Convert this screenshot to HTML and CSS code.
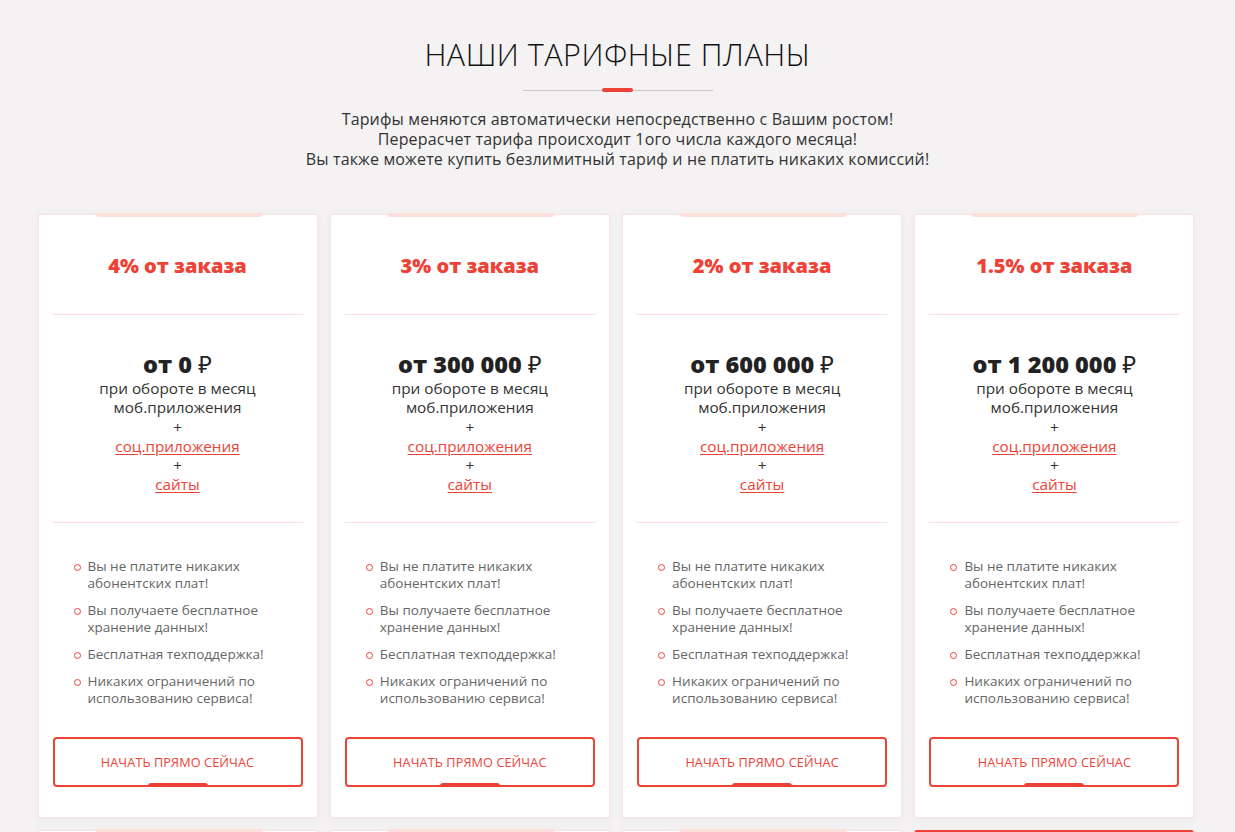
FILE: index.html
```html
<!DOCTYPE html>
<html lang="ru">
<head>
<meta charset="utf-8">
<title>Наши тарифные планы</title>
<link rel="stylesheet" href="styles.css">
</head>
<body>
<section class="plans">
  <h1 class="plans-title">НАШИ ТАРИФНЫЕ ПЛАНЫ</h1>
  <div class="sep"><span class="sep-mark"></span></div>
  <p class="plans-lead">Тарифы меняются автоматически непосредственно с Вашим ростом!<br>Перерасчет тарифа происходит 1ого числа каждого месяца!<br>Вы также можете купить безлимитный тариф и не платить никаких комиссий!</p>

  <div class="grid">
    <div class="card">
      <span class="card-tab"></span>
      <div class="card-head">4% от заказа</div>
      <div class="card-price">
        <div class="price">от 0 <span class="rub">₽</span></div>
        <div>при обороте в месяц</div>
        <div>моб.приложения</div>
        <div>+</div>
        <div><a href="#" class="lnk">соц.приложения</a></div>
        <div>+</div>
        <div><a href="#" class="lnk">сайты</a></div>
      </div>
      <ul class="feats">
        <li>Вы не платите никаких абонентских плат!</li>
        <li>Вы получаете бесплатное хранение данных!</li>
        <li>Бесплатная техподдержка!</li>
        <li>Никаких ограничений по использованию сервиса!</li>
      </ul>
      <a href="#" class="btn">НАЧАТЬ ПРЯМО СЕЙЧАС<span class="btn-tab"></span></a>
    </div>
    <div class="card">
      <span class="card-tab"></span>
      <div class="card-head">3% от заказа</div>
      <div class="card-price">
        <div class="price">от 300 000 <span class="rub">₽</span></div>
        <div>при обороте в месяц</div>
        <div>моб.приложения</div>
        <div>+</div>
        <div><a href="#" class="lnk">соц.приложения</a></div>
        <div>+</div>
        <div><a href="#" class="lnk">сайты</a></div>
      </div>
      <ul class="feats">
        <li>Вы не платите никаких абонентских плат!</li>
        <li>Вы получаете бесплатное хранение данных!</li>
        <li>Бесплатная техподдержка!</li>
        <li>Никаких ограничений по использованию сервиса!</li>
      </ul>
      <a href="#" class="btn">НАЧАТЬ ПРЯМО СЕЙЧАС<span class="btn-tab"></span></a>
    </div>
    <div class="card">
      <span class="card-tab"></span>
      <div class="card-head">2% от заказа</div>
      <div class="card-price">
        <div class="price">от 600 000 <span class="rub">₽</span></div>
        <div>при обороте в месяц</div>
        <div>моб.приложения</div>
        <div>+</div>
        <div><a href="#" class="lnk">соц.приложения</a></div>
        <div>+</div>
        <div><a href="#" class="lnk">сайты</a></div>
      </div>
      <ul class="feats">
        <li>Вы не платите никаких абонентских плат!</li>
        <li>Вы получаете бесплатное хранение данных!</li>
        <li>Бесплатная техподдержка!</li>
        <li>Никаких ограничений по использованию сервиса!</li>
      </ul>
      <a href="#" class="btn">НАЧАТЬ ПРЯМО СЕЙЧАС<span class="btn-tab"></span></a>
    </div>
    <div class="card">
      <span class="card-tab"></span>
      <div class="card-head">1.5% от заказа</div>
      <div class="card-price">
        <div class="price">от 1 200 000 <span class="rub">₽</span></div>
        <div>при обороте в месяц</div>
        <div>моб.приложения</div>
        <div>+</div>
        <div><a href="#" class="lnk">соц.приложения</a></div>
        <div>+</div>
        <div><a href="#" class="lnk">сайты</a></div>
      </div>
      <ul class="feats">
        <li>Вы не платите никаких абонентских плат!</li>
        <li>Вы получаете бесплатное хранение данных!</li>
        <li>Бесплатная техподдержка!</li>
        <li>Никаких ограничений по использованию сервиса!</li>
      </ul>
      <a href="#" class="btn">НАЧАТЬ ПРЯМО СЕЙЧАС<span class="btn-tab"></span></a>
    </div>

    <div class="card card-next"><span class="card-tab"></span></div>
    <div class="card card-next"><span class="card-tab"></span></div>
    <div class="card card-next"><span class="card-tab"></span></div>
    <div class="card card-next card-hot"></div>
  </div>
</section>
</body>
</html>
```
FILE: styles.css
```css
* { box-sizing: border-box; }
html, body { margin: 0; padding: 0; }
body {
  background: #f4f2f3;
  font-family: "Open Sans", "Noto Sans", sans-serif;
  color: #333;
}
.plans {
  padding-top: 34px;
  padding-bottom: 40px;
}
.plans-title {
  margin: 0;
  text-align: center;
  font-weight: 300;
  font-size: 30.5px;
  line-height: 40px;
  color: #111;
  letter-spacing: 0.5px;
}
.sep {
  position: relative;
  width: 190px;
  height: 1px;
  background: #c9c6c7;
  margin: 16px auto 0;
}
.sep-mark {
  position: absolute;
  left: 79px;
  top: -2px;
  width: 31px;
  height: 4px;
  border-radius: 2px;
  background: #ee4236;
}
.plans-lead {
  margin: 18px 0 0;
  text-align: center;
  font-size: 16px;
  line-height: 20px;
  color: #333;
  letter-spacing: 0.15px;
}
.grid {
  width: 1160px;
  margin: 45px auto 0;
  display: grid;
  grid-template-columns: repeat(4, 280px);
  column-gap: 12.3px;
  row-gap: 12px;
}
.card {
  position: relative;
  background: #fff;
  border: 1px solid #fbe3e1;
  border-radius: 3px;
  box-shadow: 0 2px 10px rgba(60, 30, 40, 0.05);
  padding: 0 14px 30px;
  display: flex;
  flex-direction: column;
}
.card-tab {
  position: absolute;
  top: -2px;
  left: 56px;
  width: 168px;
  height: 4px;
  border-radius: 0 0 4px 4px;
  background: #fde0dc;
}
.card-head {
  height: 100px;
  display: flex;
  align-items: center;
  justify-content: center;
  font-weight: 800;
  font-size: 20px;
  color: #ee4236;
  border-bottom: 1px solid #fbe0df;
  padding-top: 2px;
}
.card-price {
  border-bottom: 1px solid #fbe0df;
  text-align: center;
  font-size: 15.3px;
  line-height: 19.3px;
  color: #333;
  padding: 34px 0 27px;
}
.price {
  font-weight: 800;
  font-size: 23.5px;
  line-height: 30px;
  color: #222;
}
.rub {
  font-weight: 400;
}
.lnk {
  color: #ee4236;
  text-decoration: underline;
  text-underline-offset: 2px;
}
.feats {
  list-style: none;
  margin: 0;
  padding: 35px 0 30px 35px;
  font-size: 13.5px;
  line-height: 17px;
  color: #666;
}
.feats li {
  position: relative;
  margin-bottom: 10px;
}
.feats li:last-child { margin-bottom: 0; }
.feats li::before {
  content: "";
  position: absolute;
  left: -14px;
  top: 6px;
  width: 5px;
  height: 5px;
  border: 1.3px solid #ee4236;
  border-radius: 50%;
}
.btn {
  position: relative;
  display: flex;
  align-items: center;
  justify-content: center;
  height: 50px;
  border: 2px solid #ee4236;
  border-radius: 4px;
  color: #ee4236;
  font-size: 12.7px;
  text-decoration: none;
  letter-spacing: 0.1px;
}
.btn-tab {
  position: absolute;
  bottom: -2px;
  left: 50%;
  margin-left: -30px;
  width: 60px;
  height: 4px;
  border-radius: 3px 3px 0 0;
  background: #ee4236;
}
.card-next {
  min-height: 300px;
}
.card-hot {
  border-top: 4px solid #ee4236;
}
```
